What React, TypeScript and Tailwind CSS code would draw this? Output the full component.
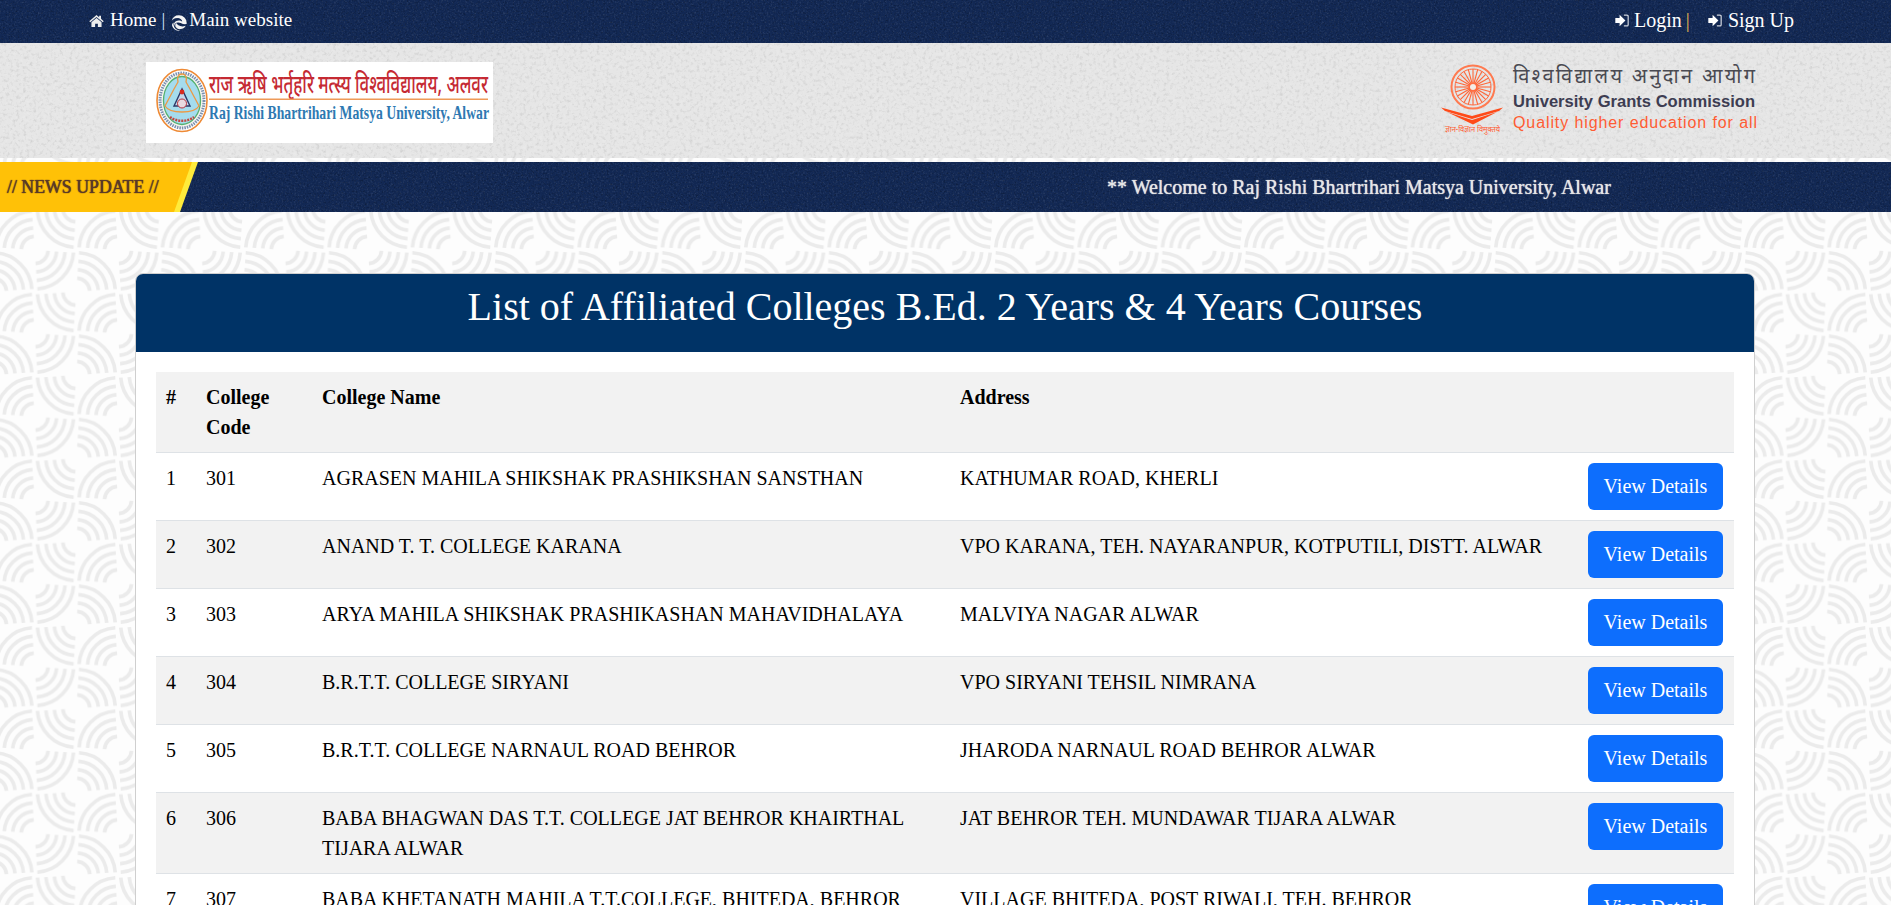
import React from "react";

const rows: [string, string, string, string][] = [
  ["1", "301", "AGRASEN MAHILA SHIKSHAK PRASHIKSHAN SANSTHAN", "KATHUMAR ROAD, KHERLI"],
  ["2", "302", "ANAND T. T. COLLEGE KARANA", "VPO KARANA, TEH. NAYARANPUR, KOTPUTILI, DISTT. ALWAR"],
  ["3", "303", "ARYA MAHILA SHIKSHAK PRASHIKASHAN MAHAVIDHALAYA", "MALVIYA NAGAR ALWAR"],
  ["4", "304", "B.R.T.T. COLLEGE SIRYANI", "VPO SIRYANI TEHSIL NIMRANA"],
  ["5", "305", "B.R.T.T. COLLEGE NARNAUL ROAD BEHROR", "JHARODA NARNAUL ROAD BEHROR ALWAR"],
  ["6", "306", "BABA BHAGWAN DAS T.T. COLLEGE JAT BEHROR KHAIRTHAL TIJARA ALWAR", "JAT BEHROR TEH. MUNDAWAR TIJARA ALWAR"],
  ["7", "307", "BABA KHETANATH MAHILA T.T.COLLEGE, BHITEDA, BEHROR", "VILLAGE BHITEDA, POST RIWALI, TEH. BEHROR"],
];

const arc = (cx: number, cy: number, r: number, a0: number, a1: number) => {
  const p = (a: number) => [cx + r * Math.cos((a * Math.PI) / 180), cy + r * Math.sin((a * Math.PI) / 180)];
  const [x0, y0] = p(a0);
  const [x1, y1] = p(a1);
  return `M${x0.toFixed(2)} ${y0.toFixed(2)}A${r} ${r} 0 0 1 ${x1.toFixed(2)} ${y1.toFixed(2)}`;
};

function Quadrant({ cx, cy, start }: { cx: number; cy: number; start: number }) {
  return (
    <g fill="none" stroke="#ebebeb" strokeWidth="3.600">
      {[39, 30.5, 22, 13.5].map((r) => (
        <path key={r} d={arc(cx, cy, r, start + 4, start + 86)} />
      ))}
    </g>
  );
}

function PageBackground() {
  const s = 41.667;
  return (
    <svg className="absolute inset-0 w-full h-full" aria-hidden="true">
      <defs>
        <pattern id="swirl" width={s * 2} height={s * 2} patternUnits="userSpaceOnUse" patternTransform="translate(-7 0)">
          <rect width={s * 2} height={s * 2} fill="#fdfdfd" />
          <Quadrant cx={0} cy={s} start={270} />
          <Quadrant cx={s} cy={0} start={0} />
          <Quadrant cx={s} cy={s * 2} start={180} />
          <Quadrant cx={s * 2} cy={s} start={90} />
        </pattern>
      </defs>
      <rect width="100%" height="100%" fill="url(#swirl)" />
    </svg>
  );
}

function Texture({ id, light, dark, freq }: { id: string; light: number; dark: number; freq: number }) {
  return (
    <svg className="absolute inset-0 w-full h-full" aria-hidden="true">
      <defs>
        <filter id={`${id}l`} x="0" y="0" width="100%" height="100%">
          <feTurbulence type="fractalNoise" baseFrequency={freq} numOctaves="3" seed="3" />
          <feColorMatrix values={`0 0 0 0 1 0 0 0 0 1 0 0 0 0 1 ${light} 0 0 0 ${-light * 0.5}`} />
        </filter>
        <filter id={`${id}d`} x="0" y="0" width="100%" height="100%">
          <feTurbulence type="fractalNoise" baseFrequency={freq} numOctaves="3" seed="8" />
          <feColorMatrix values={`0 0 0 0 0 0 0 0 0 0 0 0 0 0 0 ${dark} 0 0 0 ${-dark * 0.5}`} />
        </filter>
      </defs>
      <rect width="100%" height="100%" filter={`url(#${id}l)`} />
      <rect width="100%" height="100%" filter={`url(#${id}d)`} />
    </svg>
  );
}

function HomeIcon() {
  return (
    <svg viewBox="0 0 16 14" className="w-[15px] h-[14px] shrink-0 mt-[6px]" fill="#ececec">
      <path d="M8 0.5 0.3 7.2l1 1.1L8 2.6l6.7 5.7 1-1.1L12.8 4.700V1.300h-2v1.700z" />
      <path d="M8 3.800 2.600 8.400v5.100h3.900V9.800h3v3.700h3.900V8.400z" />
    </svg>
  );
}

function SwirlIcon() {
  return (
    <svg viewBox="0 0 16 16" className="w-[16px] h-[16px] shrink-0 mt-[7px]" fill="#f4f4f4">
      <path d="M8 .3A7.700 7.700 0 0 0 .6 5.900C2 3.700 4.600 2.700 7.200 3.100c2.300.4 3.800 1.900 4 3.500-1.500-1.200-4.200-1.600-6.300-.3C3 7.500 2.600 9.500 3.300 11.200 3 8.900 5 7.400 7.200 7.600c2.700.2 4.300 2.100 8.300 1.500.1-.4.2-.7.2-1.100A7.700 7.700 0 0 0 8 .3z" />
      <path d="M4.400 11.500c.9 1.800 3 2.800 5.200 2.600 2-.2 4-1.300 5.100-3.400-2.600 1.200-5.300.9-7.300-.4-1.400-.9-2.200-1.900-2.300-2.700-.6 1.200-1.100 2.600-.7 3.900zM1.200 11c1 3 3.800 4.700 6.800 4.700.5 0 1 0 1.400-.1-3.800-.3-6.300-2.200-6.800-5.600-.2-.9-.1-1.700.1-2.500C1.100 8.600.8 9.800 1.200 11z" />
    </svg>
  );
}

function LoginIcon() {
  return (
    <svg viewBox="0 0 15 14" className="w-[14px] h-[13px] shrink-0" fill="#ffffff">
      <path d="M0.300 4.200h4.600V0.800L11.200 7l-6.300 6.200V9.800H.3z" />
      <path d="M9.500 0.500h3.300c1.300 0 2 .8 2 2v9c0 1.200-.7 2-2 2H9.500v-1.300h3c.7 0 1-.4 1-1V2.800c0-.6-.3-1-1-1h-3z" opacity=".8" />
    </svg>
  );
}

function UniversityLogo() {
  return (
    <svg viewBox="0 0 347 81" className="w-[347px] h-[81px] shrink-0 bg-white overflow-visible">
      <ellipse cx="36" cy="38.500" rx="25" ry="31" fill="#fff" stroke="#ee8a35" strokeWidth="1.600" />
      <ellipse cx="36" cy="38.500" rx="22" ry="27.500" fill="#f4f4ee" stroke="#7a8fb0" strokeWidth="3" strokeDasharray="1.500 1" />
      <ellipse cx="36" cy="38.500" rx="18.500" ry="24" fill="#a5dcee" stroke="#55b070" strokeWidth="1.300" />
      <path d="M36 12c-4 0-5 4-4 8l-4 7-9 17c3 5 10 6 17 6s14-1 17-6l-9-17-4-7c1-4 0-8-4-8z" fill="none" stroke="#ec9a45" strokeWidth="1.300" />
      <path d="M36 27l-8 17h16z" fill="#c6d6ea" stroke="#2a3768" strokeWidth="1.400" />
      <circle cx="36" cy="30" r="2.400" fill="#d82b20" />
      <circle cx="36" cy="41.500" r="4.500" fill="#e8d8e0" stroke="#b5303d" />
      <path d="M24 55c6 5 18 5 24 0" fill="none" stroke="#c2483f" strokeWidth="2.500" strokeDasharray="2 1" />
      <text x="63" y="31" fontFamily="'Noto Sans','Liberation Sans',sans-serif" fontSize="26" fontWeight="500" fill="#c52a33" textLength="279" lengthAdjust="spacingAndGlyphs">राज ऋषि भर्तृहरि मत्स्य विश्वविद्यालय, अलवर</text>
      <rect x="63" y="36.500" width="279" height="1.500" fill="#ee9a58" />
      <text x="63" y="57" fontFamily="'Liberation Serif',serif" fontSize="19" fontWeight="700" fill="#2e79b2" textLength="280" lengthAdjust="spacingAndGlyphs">Raj Rishi Bhartrihari Matsya University, Alwar</text>
    </svg>
  );
}

function UgcLogo() {
  const spokes = Array.from({ length: 24 }, (_, i) => (i * 360) / 24);
  return (
    <svg viewBox="0 0 317 72" className="w-[317px] h-[72px] shrink-0 overflow-visible">
      <circle cx="32" cy="24" r="21.500" fill="none" stroke="#ff7a50" strokeWidth="2" />
      <circle cx="32" cy="24" r="18" fill="none" stroke="#ff6a40" strokeWidth="1" />
      <circle cx="32" cy="24" r="4" fill="#ffe7dc" stroke="#ff6a40" strokeWidth="1.200" />
      {spokes.map((a) => (
        <line key={a} x1="32" y1="24" x2={32 + 18 * Math.cos((a * Math.PI) / 180)} y2={24 + 18 * Math.sin((a * Math.PI) / 180)} stroke="#ff6638" strokeWidth="1.100" />
      ))}
      <circle cx="32" cy="24" r="3" fill="#f4ece6" />
      <path d="M0 44.500 31 53 62 44.500 58 48 31 56 4 48z" fill="#ff4a18" />
      <path d="M6 49 31 57 56 49 32 61.500z" fill="#ff4a18" />
      <text x="4" y="69" fontFamily="'Noto Sans','Liberation Sans',sans-serif" fontSize="8" fill="#ff5a30" textLength="55" lengthAdjust="spacingAndGlyphs">ज्ञान-विज्ञान विमुक्तये</text>
      <text x="72" y="20" fontFamily="'Noto Sans','Liberation Sans',sans-serif" fontSize="20" fill="#4a4a52" textLength="242" lengthAdjust="spacing">विश्वविद्यालय अनुदान आयोग</text>
      <text x="72" y="44" fontFamily="'Liberation Sans',sans-serif" fontSize="16.500" fontWeight="700" fill="#3d3d52" textLength="242" lengthAdjust="spacingAndGlyphs">University Grants Commission</text>
      <text x="72" y="65" fontFamily="'Liberation Sans',sans-serif" fontSize="16" fill="#ff5c33" textLength="244" lengthAdjust="spacing">Quality higher education for all</text>
    </svg>
  );
}

export default function App() {
  return (
    <div className="relative h-screen overflow-hidden font-['Liberation_Serif',serif] text-black">
      <PageBackground />
      <div className="relative">
        <div className="relative h-[43px] bg-[#122854] text-white">
          <Texture id="topbar" light={0.25} dark={0.7} freq={0.55} />
          <div className="relative flex justify-between pl-[89px] pr-[97px]">
            <div className="flex items-start pt-[8px] text-[19px] leading-[24px]">
              <HomeIcon />
              <span className="ml-[6px]">Home</span>
              <span className="ml-[5px] mr-[6px] text-[#cfe0ff]">|</span>
              <SwirlIcon />
              <span className="ml-[2px]">Main website</span>
            </div>
            <div className="flex items-center pt-[8px] text-[20px] leading-[24px]">
              <LoginIcon />
              <span className="ml-[5px]">Login</span>
              <span className="ml-[4px] text-[#e0b050]">|</span>
              <span className="w-[18px]" />
              <LoginIcon />
              <span className="ml-[6px]">Sign Up</span>
            </div>
          </div>
        </div>

        <div className="relative h-[115px] bg-[#e6e6e6]">
          <Texture id="paper" light={0.4} dark={0.22} freq={0.3} />
          <div className="relative flex justify-between items-start pl-[146px] pr-[133px]">
            <div className="mt-[19px]"><UniversityLogo /></div>
            <div className="mt-[20px]"><UgcLogo /></div>
          </div>
        </div>

        <div className="relative h-[50px] mt-[4px] bg-[#122854] overflow-hidden">
          <Texture id="newsbar" light={0.25} dark={0.7} freq={0.55} />
          <div className="absolute left-0 top-0 h-full w-[198px] bg-[#ffeb3b] [clip-path:polygon(0_0,100%_0,180px_100%,0_100%)]" />
          <div className="absolute left-0 top-0 h-full w-[192px] bg-[#ffc107] [clip-path:polygon(0_0,100%_0,174px_100%,0_100%)]" />
          <div className="absolute left-[7px] top-[13px] text-[17.8px] leading-[24px] text-[#5b3a26] [text-shadow:0_0_1px_#5b3a26,0_0_1px_#5b3a26]">// NEWS UPDATE //</div>
          <div className="absolute left-[1107px] top-[13px] text-[20px] leading-[24px] text-[#e6e6e6] whitespace-nowrap [text-shadow:0_0_1px_#ffffff]">** Welcome to Raj Rishi Bhartrihari Matsya University, Alwar</div>
        </div>

        <div className="mt-[61px] ml-[135px] mr-[136px] rounded-[8px] border border-[#cfcfcf] bg-white overflow-hidden">
          <div className="h-[79px] bg-[#003366] text-white text-center text-[40px] leading-[68px] -mx-px -mt-px">
            List of Affiliated Colleges B.Ed. 2 Years &amp; 4 Years Courses
          </div>
          <div className="px-[20px] py-[20px]">
            <table className="w-full table-fixed border-collapse text-[20px] leading-[30px]">
              <colgroup>
                <col className="w-[40px]" />
                <col className="w-[116px]" />
                <col className="w-[638px]" />
                <col />
                <col className="w-[157px]" />
              </colgroup>
              <thead>
                <tr className="bg-[#f2f2f2] border-b border-[#dee2e6] font-bold">
                  <th className="p-[10px] text-left align-top">#</th>
                  <th className="p-[10px] text-left align-top">College Code</th>
                  <th className="p-[10px] text-left align-top">College Name</th>
                  <th className="p-[10px] text-left align-top">Address</th>
                  <th className="p-[10px]" />
                </tr>
              </thead>
              <tbody>
                {rows.map((r, i) => (
                  <tr key={r[0]} className={`border-b border-[#dee2e6] ${i % 2 === 1 ? "bg-[#f2f2f2]" : "bg-white"}`}>
                    <td className="p-[10px] align-top">{r[0]}</td>
                    <td className="p-[10px] align-top">{r[1]}</td>
                    <td className="p-[10px] align-top">{r[2]}</td>
                    <td className="p-[10px] align-top">{r[3]}</td>
                    <td className="pl-[10px] pr-[11px] py-[10px] align-top text-right">
                      <button className="h-[47px] w-[135px] pb-[2px] rounded-[6px] bg-[#0d6efd] text-white text-[20px] leading-[30px]">View Details</button>
                    </td>
                  </tr>
                ))}
              </tbody>
            </table>
          </div>
        </div>
      </div>
    </div>
  );
}
